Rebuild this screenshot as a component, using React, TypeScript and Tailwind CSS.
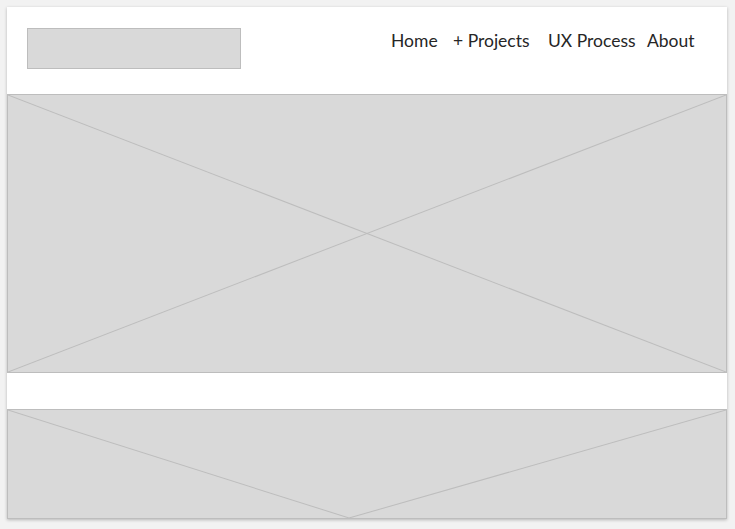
import React from "react";

function Placeholder({ className, lines }: { className: string; lines: [number, number, number, number][] }) {
  return (
    <div className={`relative bg-[#d9d9d9] border border-[#bdbdbd] ${className}`}>
      <svg className="absolute inset-0 w-full h-full" viewBox="0 0 720 279" preserveAspectRatio="none">
        {lines.map(([x1, y1, x2, y2], i) => (
          <line key={i} x1={x1} y1={y1} x2={x2} y2={y2} stroke="#bdbdbd" strokeWidth="1" vectorEffect="non-scaling-stroke" />
        ))}
      </svg>
    </div>
  );
}

export default function App() {
  return (
    <div className="h-[529px] w-[735px] bg-[#f2f2f2] pt-[7px] pl-[7px] overflow-hidden" style={{ fontFamily: "Lato, 'Open Sans', sans-serif" }}>
      <div className="w-[720px] h-[512px] bg-white shadow-[0_1px_3px_rgba(0,0,0,0.25)] flex flex-col">
        <header className="h-[87px] flex items-start shrink-0">
          <div className="ml-[20px] mt-[21px] w-[214px] h-[41px] bg-[#d9d9d9] border border-[#bdbdbd]" />
          <nav className="ml-[150px] mt-[25px] flex text-[17.5px] leading-[18px] text-[#262626]">
            <span className="w-[62px]">Home</span>
            <span className="w-[95px]">+ Projects</span>
            <span className="w-[99px]">UX Process</span>
            <span>About</span>
          </nav>
        </header>
        <Placeholder className="h-[279px] shrink-0" lines={[[0, 0, 720, 279], [720, 0, 0, 279]]} />
        <div className="h-[36px] shrink-0 bg-white" />
        <Placeholder className="h-[110px] shrink-0" lines={[[0, 0, 342, 279], [720, 0, 342, 279]]} />
      </div>
    </div>
  );
}
